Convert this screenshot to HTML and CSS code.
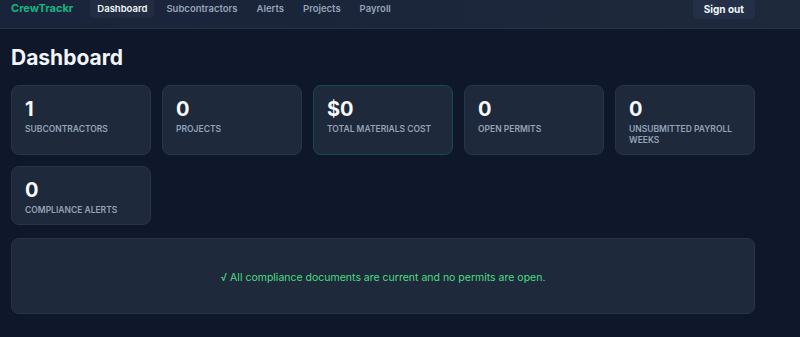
FILE: index.html
```html
<!DOCTYPE html>
<html lang="en">
<head>
    <meta charset="UTF-8">
    <meta name="viewport" content="width=device-width, initial-scale=1.0">
    <title>CrewTrackr - Dashboard</title>
    <link rel="stylesheet" href="styles.css">
</head>
<body>
    <header class="topbar">
        <div class="brand">CrewTrackr</div>
        <nav class="nav-links">
            <a href="#" class="nav-link active">Dashboard</a>
            <a href="#" class="nav-link">Subcontractors</a>
            <a href="#" class="nav-link">Alerts</a>
            <a href="#" class="nav-link">Projects</a>
            <a href="#" class="nav-link">Payroll</a>
        </nav>
        <button class="signout">Sign out</button>
    </header>

    <main class="page">
        <h1>Dashboard</h1>

        <section class="stats">
            <div class="stat-card">
                <div class="stat-value">1</div>
                <div class="stat-label">Subcontractors</div>
            </div>
            <div class="stat-card">
                <div class="stat-value">0</div>
                <div class="stat-label">Projects</div>
            </div>
            <div class="stat-card highlight">
                <div class="stat-value">$0</div>
                <div class="stat-label">Total materials cost</div>
            </div>
            <div class="stat-card">
                <div class="stat-value">0</div>
                <div class="stat-label">Open permits</div>
            </div>
            <div class="stat-card">
                <div class="stat-value">0</div>
                <div class="stat-label">Unsubmitted payroll weeks</div>
            </div>
            <div class="stat-card">
                <div class="stat-value">0</div>
                <div class="stat-label">Compliance alerts</div>
            </div>
        </section>

        <section class="all-clear">
            <p>&#8730; All compliance documents are current and no permits are open.</p>
        </section>
    </main>
</body>
</html>
```

FILE: styles.css
```css
/* Reset */
* {
    margin: 0;
    padding: 0;
    box-sizing: border-box;
}

body {
    font-family: 'Inter', 'Liberation Sans', sans-serif;
    background: #0f172a;
    color: #f1f5f9;
    overflow: hidden;
}

/* Barra superior */
.topbar {
    display: flex;
    align-items: flex-start;
    height: 29px;
    padding: 0 45px 0 11px;
    background: linear-gradient(90deg, #19233a, #1e293b);
    border-bottom: 1px solid #263244;
}

.brand {
    color: #10b981;
    font-weight: 700;
    font-size: 11px;
    line-height: 16px;
    margin-right: 17px;
}

.nav-links {
    display: flex;
    gap: 5px;
    flex: 1;
    margin-top: -1px;
}

.nav-link {
    color: #94a3b8;
    text-decoration: none;
    font-size: 9.5px;
    font-weight: 600;
    line-height: 14px;
    padding: 3px 7px 2px;
    border-radius: 4px;
}

.nav-link.active {
    color: #f1f5f9;
    background: #222d42;
}

.signout {
    margin-top: -2px;
    background: #243047;
    border: none;
    border-radius: 5px;
    color: #f1f5f9;
    font-family: inherit;
    font-size: 10px;
    font-weight: 700;
    line-height: 14px;
    padding: 4px 11px 3px;
    cursor: pointer;
}

/* Conteudo */
.page {
    width: 766px;
    padding: 16px 11px;
}

.page h1 {
    font-size: 21px;
    font-weight: 700;
    line-height: 26px;
    margin-bottom: 14px;
}

.stats {
    display: grid;
    grid-template-columns: repeat(5, 1fr);
    gap: 11px;
    margin-bottom: 13px;
}

.stat-card {
    background: #1e293b;
    border: 1px solid #273449;
    border-radius: 8px;
    padding: 12px 13px 8px;
}

.stat-card.highlight {
    border-color: #1b4a4d;
}

.stat-value {
    font-size: 20px;
    font-weight: 700;
    line-height: 22px;
    color: #f8fafc;
}

.stat-label {
    font-size: 8.5px;
    font-weight: 600;
    text-transform: uppercase;
    color: #94a3b8;
    line-height: 11px;
    margin-top: 4px;
}

.all-clear {
    display: flex;
    align-items: center;
    justify-content: center;
    height: 76px;
    padding-top: 3px;
    background: #1e293b;
    border: 1px solid #273449;
    border-radius: 8px;
}

.all-clear p {
    color: #4ade80;
    font-size: 10.5px;
}
```
